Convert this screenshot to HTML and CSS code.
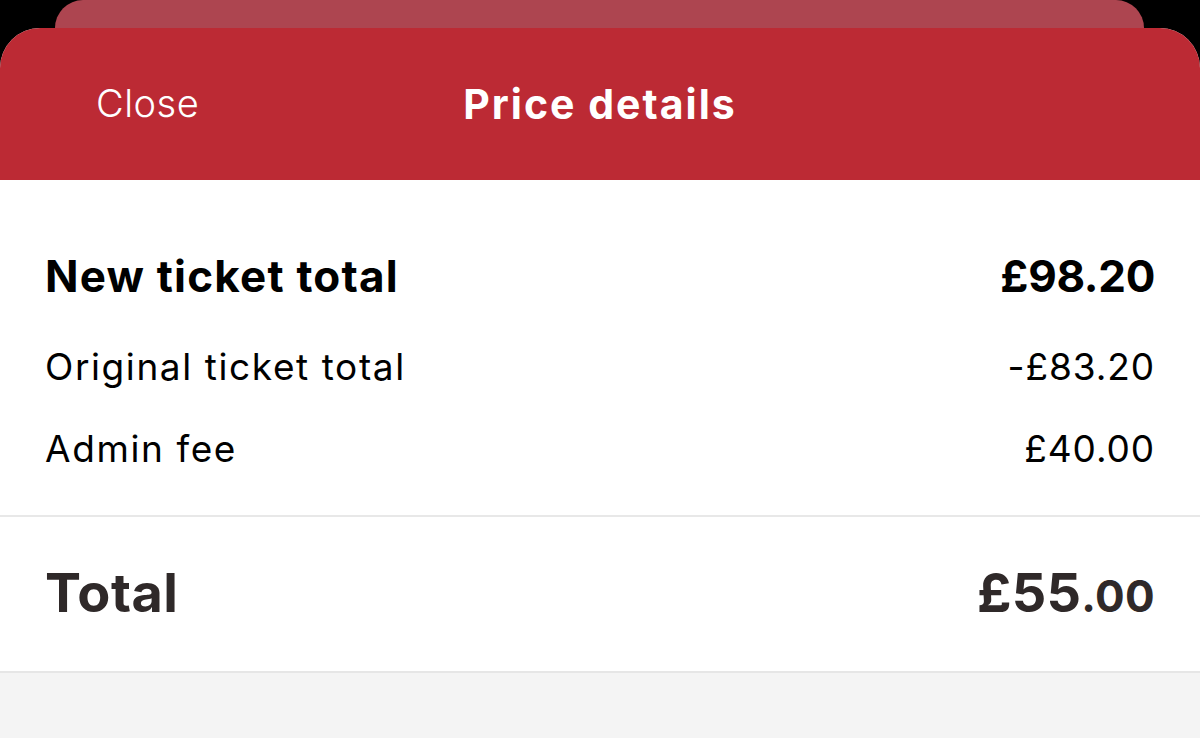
FILE: index.html
```html
<!DOCTYPE html>
<html lang="en">
<head>
<meta charset="utf-8">
<title>Price details</title>
<link rel="stylesheet" href="styles.css">
</head>
<body>
<div class="screen">
  <div class="back-card"></div>
  <div class="sheet">
    <header class="header">
      <span class="close">Close</span>
      <h1 class="title">Price details</h1>
    </header>
    <section class="breakdown">
      <div class="row row-main">
        <span class="label">New ticket total</span>
        <span class="amount">£98.20</span>
      </div>
      <div class="row row-sub row-first">
        <span class="label">Original ticket total</span>
        <span class="amount">-£83.20</span>
      </div>
      <div class="row row-sub row-second">
        <span class="label">Admin fee</span>
        <span class="amount">£40.00</span>
      </div>
    </section>
    <section class="total">
      <span class="total-label">Total</span>
      <span class="total-amount">£55<span class="decimals">.00</span></span>
    </section>
    <div class="footer"></div>
  </div>
</div>
</body>
</html>
```
FILE: styles.css
```css
html, body {
  margin: 0;
  padding: 0;
  background: #000;
}

body {
  font-family: "Inter", "Open Sans", sans-serif;
  width: 1200px;
  height: 738px;
  overflow: hidden;
}

.screen {
  display: flex;
  flex-direction: column;
  height: 738px;
}

.back-card {
  height: 28px;
  margin: 0 56px 0 55px;
  background: #ad4550;
  border-radius: 30px 30px 0 0;
  flex: none;
}

.sheet {
  flex: 1;
  display: flex;
  flex-direction: column;
  background: #f4f4f4;
  border-radius: 40px 40px 0 0;
  overflow: hidden;
}

.header {
  height: 152px;
  flex: none;
  background: #bc2a34;
  display: flex;
  align-items: center;
  position: relative;
  color: #fff;
}

.close {
  margin-left: 96px;
  font-size: 38px;
  font-weight: 300;
  letter-spacing: 0.5px;
  line-height: 50px;
  margin-top: -2px;
}

.title {
  position: absolute;
  left: 0;
  right: 0;
  top: 0;
  bottom: 0;
  margin: 0;
  display: flex;
  align-items: center;
  justify-content: center;
  font-size: 41px;
  font-weight: 700;
  letter-spacing: 2px;
  padding-bottom: 1px;
}

.breakdown {
  background: #fff;
  padding: 66px 45px 37px 45px;
  border-bottom: 2px solid #e8e8e8;
  display: flex;
  flex-direction: column;
  color: #000;
}

.row {
  display: flex;
  justify-content: space-between;
  align-items: center;
  height: 60px;
}

.row-main {
  font-size: 44px;
  font-weight: 700;
  letter-spacing: 1.2px;
}

.row-main .amount {
  letter-spacing: -0.3px;
}

.row-sub {
  font-size: 37px;
  font-weight: 400;
  letter-spacing: 1.6px;
}

.row-sub .amount {
  letter-spacing: 0.9px;
}

.row-first {
  margin-top: 30px;
}

.row-second {
  margin-top: 22px;
}

.total {
  background: #fff;
  height: 154px;
  padding: 0 45px 0 45px;
  display: flex;
  justify-content: space-between;
  align-items: center;
  border-bottom: 2px solid #e6e6e6;
  color: #2f2929;
  font-weight: 700;
}

.total-label {
  font-size: 54px;
  letter-spacing: 0.5px;
  margin-top: -4px;
}

.total-amount {
  font-size: 54px;
  letter-spacing: 0.3px;
  margin-top: -4px;
}

.decimals {
  font-size: 44px;
}

.footer {
  flex: 1;
  background: #f4f4f4;
}
```
